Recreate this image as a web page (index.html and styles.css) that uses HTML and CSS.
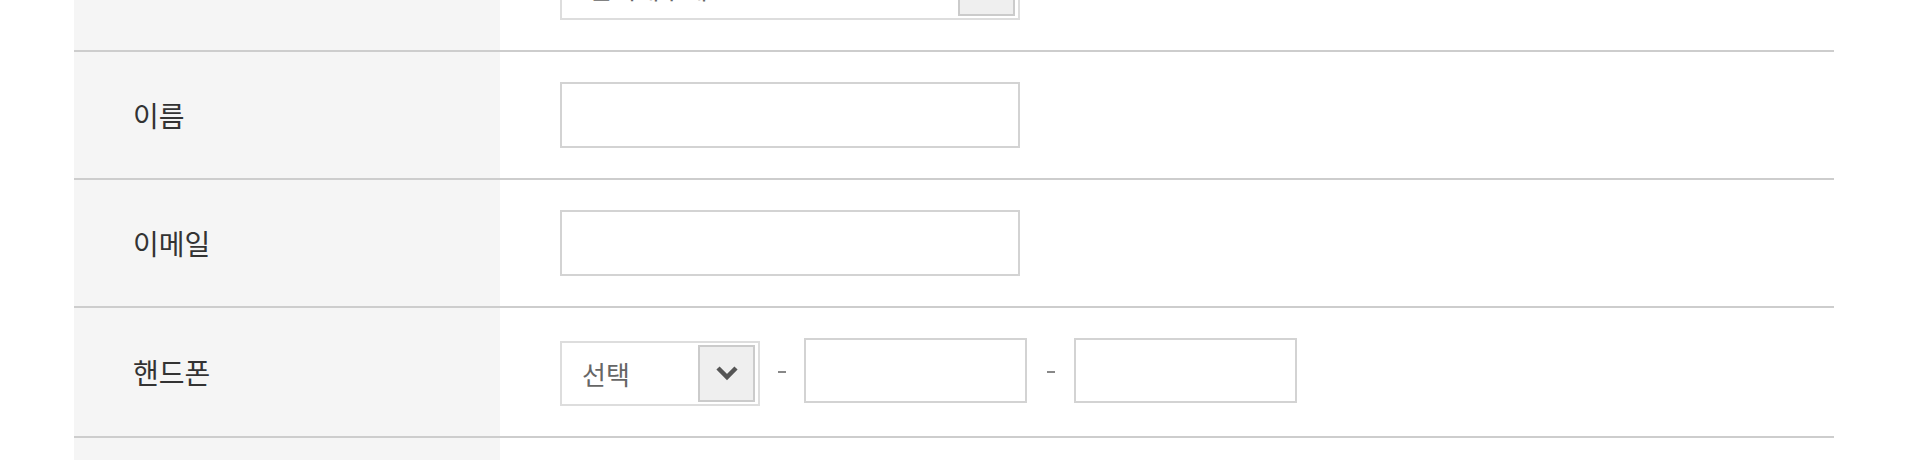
FILE: index.html
```html
<!DOCTYPE html>
<html lang="ko">
<head>
<meta charset="utf-8">
<title>회원정보</title>
<link rel="stylesheet" href="styles.css">
</head>
<body>
<div class="form">
  <div class="row">
    <div class="th"></div>
    <div class="td">
      <div class="select select-wide">
        <span class="select-text">선택해주세요</span>
        <span class="select-btn"><svg width="24" height="16" viewBox="0 0 24 16"><polyline points="3,3 12,12 21,3" fill="none" stroke="#555" stroke-width="4.5"/></svg></span>
      </div>
    </div>
  </div>
  <div class="row">
    <div class="th">이름</div>
    <div class="td"><input class="ipt ipt-wide" type="text"></div>
  </div>
  <div class="row">
    <div class="th">이메일</div>
    <div class="td"><input class="ipt ipt-wide" type="text"></div>
  </div>
  <div class="row row-phone">
    <div class="th">핸드폰</div>
    <div class="td">
      <div class="select select-phone">
        <span class="select-text">선택</span>
        <span class="select-btn"><svg width="24" height="16" viewBox="0 0 24 16"><polyline points="3,3 12,12 21,3" fill="none" stroke="#555" stroke-width="4.5"/></svg></span>
      </div>
      <span class="dash"></span>
      <input class="ipt ipt-phone" type="text">
      <span class="dash"></span>
      <input class="ipt ipt-phone" type="text">
    </div>
  </div>
  <div class="row">
    <div class="th"></div>
    <div class="td"></div>
  </div>
</div>
</body>
</html>
```

FILE: styles.css
```css
html, body {
  margin: 0;
  padding: 0;
  background: #fff;
  overflow: hidden;
}
body {
  font-family: "Noto Sans CJK KR", "Noto Sans", sans-serif;
  color: #333;
}
.form {
  width: 1760px;
  margin: -76px auto 0;
}
.row {
  display: flex;
  height: 128px;
  box-sizing: border-box;
  border-bottom: 2px solid #cdcdcd;
}
.row-phone {
  height: 130px;
}
.th {
  width: 426px;
  flex: none;
  box-sizing: border-box;
  background: #f5f5f5;
  display: flex;
  align-items: center;
  padding-left: 59px;
  font-size: 28px;
  color: #333;
}
.td {
  flex: 1;
  display: flex;
  align-items: center;
  padding-left: 60px;
}
.ipt {
  box-sizing: border-box;
  border: 2px solid #d3d3d3;
  background: #fff;
  margin: 0;
  padding: 0 12px;
  outline: none;
}
.ipt-wide {
  width: 460px;
  height: 66px;
}
.ipt-phone {
  width: 223px;
  height: 65px;
  margin-top: -3px;
}
.select {
  box-sizing: border-box;
  border: 2px solid #dddddd;
  background: #fff;
  display: flex;
  align-items: center;
  padding-left: 20px;
  font-size: 26px;
  color: #666;
}
.select-wide {
  width: 460px;
  height: 66px;
  padding-left: 26px;
}
.select-phone {
  width: 200px;
  height: 65px;
  margin-top: 2px;
}
.select-btn {
  margin-left: auto;
  margin-right: 3px;
  width: 57px;
  height: 57px;
  box-sizing: border-box;
  border: 2px solid #cbcbcb;
  background: #efefef;
  display: flex;
  align-items: center;
  justify-content: center;
}
.dash {
  width: 8px;
  height: 2px;
  background: #888;
  margin: 0 18px;
}
.dash + .ipt + .dash {
  margin: 0 19px 0 20px;
}
```
